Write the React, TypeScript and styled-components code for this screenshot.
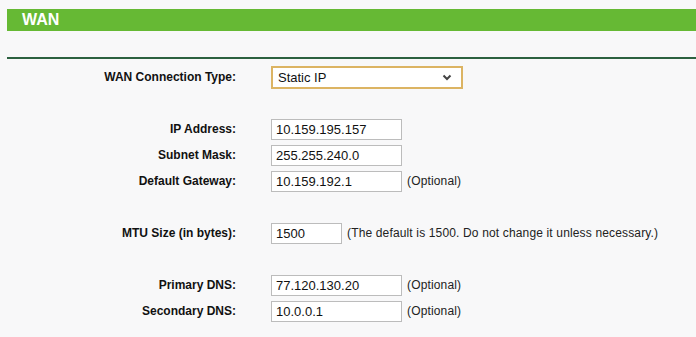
import styled, { createGlobalStyle } from 'styled-components';

const GlobalStyle = createGlobalStyle`
	html, body {
		margin: 0;
		padding: 0;
		background: #f8f8f9;
	}
	body {
		font-family: 'Liberation Sans', Arial, sans-serif;
		font-size: 12px;
		color: #000;
	}
`;

const fields = [
	{ label: 'IP Address:', value: '10.159.195.157' },
	{ label: 'Subnet Mask:', value: '255.255.240.0' },
	{ label: 'Default Gateway:', value: '10.159.192.1', note: '(Optional)' },
];

const dnsFields = [
	{ label: 'Primary DNS:', value: '77.120.130.20', note: '(Optional)' },
	{ label: 'Secondary DNS:', value: '10.0.0.1', note: '(Optional)' },
];

export default function App() {
	return (
		<Page>
			<GlobalStyle />
			<TitleBar>WAN</TitleBar>
			<Divider />
			<Form>
				<Row height="26px">
					<Label>WAN Connection Type:</Label>
					<SelectBox>
						<span>Static IP</span>
						<svg width="10" height="7" viewBox="0 0 10 7">
							<path d="M1.5 1.5 L5 5 L8.5 1.5" fill="none" stroke="#444" strokeWidth="2" />
						</svg>
					</SelectBox>
				</Row>
				<Spacer height="26px" />
				{fields.map((f) => (
					<Row key={f.label}>
						<Label>{f.label}</Label>
						<TextInput readOnly defaultValue={f.value} />
						{f.note && <Note>{f.note}</Note>}
					</Row>
				))}
				<Spacer height="26px" />
				<Row>
					<Label>MTU Size (in bytes):</Label>
					<TextInput readOnly defaultValue="1500" width="71px" />
					<Note>(The default is 1500. Do not change it unless necessary.)</Note>
				</Row>
				<Spacer height="26px" />
				{dnsFields.map((f) => (
					<Row key={f.label}>
						<Label>{f.label}</Label>
						<TextInput readOnly defaultValue={f.value} />
						<Note>{f.note}</Note>
					</Row>
				))}
			</Form>
		</Page>
	);
}

const Page = styled.div`
	padding-top: 9px;
	width: 696px;
	height: 337px;
	box-sizing: border-box;
`;

const TitleBar = styled.div`
	margin-left: 7px;
	height: 22px;
	line-height: 22px;
	padding-left: 15px;
	background: #66b934;
	color: #fff;
	font-weight: bold;
	font-size: 16px;
`;

const Divider = styled.div`
	margin: 26px 0 0 7px;
	height: 2px;
	background: #2c6140;
`;

const Form = styled.div`
	padding-top: 5px;
`;

const Row = styled.div<{ height?: string }>`
	display: flex;
	align-items: center;
	height: ${(props) => props.height || '26px'};
`;

const Spacer = styled.div<{ height: string }>`
	height: ${(props) => props.height};
`;

const Label = styled.div`
	width: 236px;
	margin-right: 35px;
	text-align: right;
	font-weight: bold;
	font-size: 12px;
	color: #111;
`;

const SelectBox = styled.div`
	width: 192px;
	height: 23px;
	box-sizing: border-box;
	border: 2px solid #dcb463;
	background: #fff;
	display: flex;
	align-items: center;
	justify-content: space-between;
	padding: 0 9px 0 5px;
	font-size: 13px;
	color: #111;
`;

const TextInput = styled.input<{ width?: string }>`
	width: ${(props) => props.width || '131px'};
	height: 21px;
	box-sizing: border-box;
	border: 1px solid #bcbcbc;
	background: #fff;
	padding: 0 0 0 4px;
	margin: 0;
	font-family: 'Liberation Sans', Arial, sans-serif;
	font-size: 13px;
	color: #111;
	outline: none;
`;

const Note = styled.span`
	margin-left: 5px;
	font-size: 12px;
	letter-spacing: 0.15px;
	color: #222;
`;
